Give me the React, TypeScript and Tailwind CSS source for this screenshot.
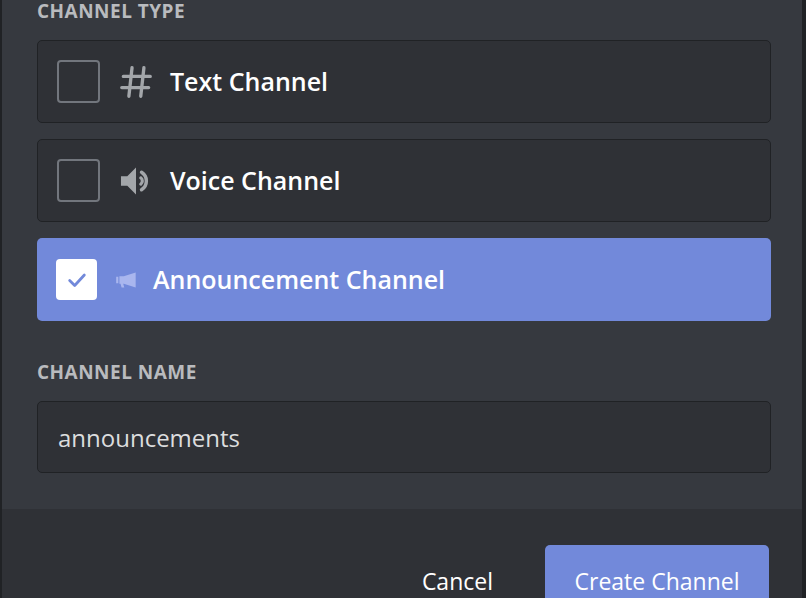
import React, { useState } from 'react';

type ChannelKind = 'text' | 'voice' | 'announcement';

const HashIcon = () => (
  <svg width="38" height="38" viewBox="0 0 24 24" fill="none" stroke="#a3a6aa" strokeWidth="2.1" strokeLinecap="round">
    <path d="M9.5 3 7.5 21M17 3l-2 18M4 8.5h17M3 15.5h17" />
  </svg>
);

const SpeakerIcon = () => (
  <svg width="38" height="38" viewBox="0 0 24 24" fill="none">
    <path d="M2.5 9h4l5.5-5.5v17L6.5 15h-4z" fill="#a3a6aa" />
    <path d="M15 10a2.5 2.5 0 0 1 0 4" stroke="#a3a6aa" strokeWidth="2" strokeLinecap="round" />
    <path d="M15.5 6.5a6.5 6.5 0 0 1 0 11" stroke="#a3a6aa" strokeWidth="2.2" strokeLinecap="round" />
  </svg>
);

const MegaphoneIcon = () => (
  <svg width="26" height="26" viewBox="0 0 24 24" fill="#a9b6ee">
    <path d="M2 9h2v6H2z" />
    <path d="M5 8.5h4L20 5v14L9 15.5H8.5L9.5 19H7l-1-3.5H5z" />
  </svg>
);

const App: React.FC = () => {
  const [kind, setKind] = useState<ChannelKind>('announcement');

  const rows: { id: ChannelKind; label: string; icon: React.ReactNode }[] = [
    { id: 'text', label: 'Text Channel', icon: <HashIcon /> },
    { id: 'voice', label: 'Voice Channel', icon: <SpeakerIcon /> },
    { id: 'announcement', label: 'Announcement Channel', icon: <MegaphoneIcon /> },
  ];

  return (
    <div
      className="w-[806px] h-[598px] overflow-hidden bg-[#202225] flex"
      style={{ fontFamily: '"Open Sans", "Noto Sans", sans-serif' }}>
      <div className="w-[800px] ml-[2px] bg-[#36393f] flex flex-col">
        <div className="pl-[35px] pr-[31px] pb-[36px] flex flex-col">
          <h2 className="text-[19px] font-bold text-[#b9bbbe] tracking-wide leading-none mt-[2px] mb-[19px]">
            CHANNEL TYPE
          </h2>
          <div className="flex flex-col gap-[16px]">
            {rows.map((row) => {
              const active = kind === row.id;
              return (
                <button
                  key={row.id}
                  onClick={() => setKind(row.id)}
                  className={`h-[83px] rounded-[5px] flex items-center px-[19px] text-left ${
                    active ? 'bg-[#7289da]' : 'bg-[#2f3136] border border-[#202225]'
                  }`}>
                  {active ? (
                    <span className="w-[41px] h-[41px] rounded-[4px] bg-white flex items-center justify-center">
                      <svg width="22" height="22" viewBox="0 0 24 24" fill="none" stroke="#7289da" strokeWidth="3" strokeLinecap="round" strokeLinejoin="round">
                        <path d="M4 12.5 9.5 18 20 6.5" />
                      </svg>
                    </span>
                  ) : (
                    <span className="w-[43px] h-[43px] rounded-[4px] border-2 border-[#72767d]" />
                  )}
                  <span className={`flex items-center justify-center ml-[16px] ${active ? 'w-[28px]' : 'w-[40px]'}`}>
                    {row.icon}
                  </span>
                  <span className={`text-[25px] text-white font-semibold ${active ? 'ml-[12px]' : 'ml-[14px]'}`}>
                    {row.label}
                  </span>
                </button>
              );
            })}
          </div>
          <h2 className="text-[19px] font-bold text-[#b9bbbe] tracking-wide leading-none mt-[42px] mb-[19px]">
            CHANNEL NAME
          </h2>
          <input
            defaultValue="announcements"
            className="h-[72px] rounded-[5px] bg-[#2f3136] border border-[#202225] px-[20px] text-[24px] text-[#dcddde] outline-none"
          />
        </div>
        <div className="flex-1 bg-[#2f3136] flex items-start justify-end gap-[52px] pt-[36px] pr-[33px]">
          <button className="text-[23px] font-medium text-white h-[72px] flex items-center">Cancel</button>
          <button className="w-[224px] h-[72px] rounded-[5px] bg-[#7289da] text-[23px] font-medium text-white flex items-center justify-center">
            Create Channel
          </button>
        </div>
      </div>
    </div>
  );
};

export default App;
